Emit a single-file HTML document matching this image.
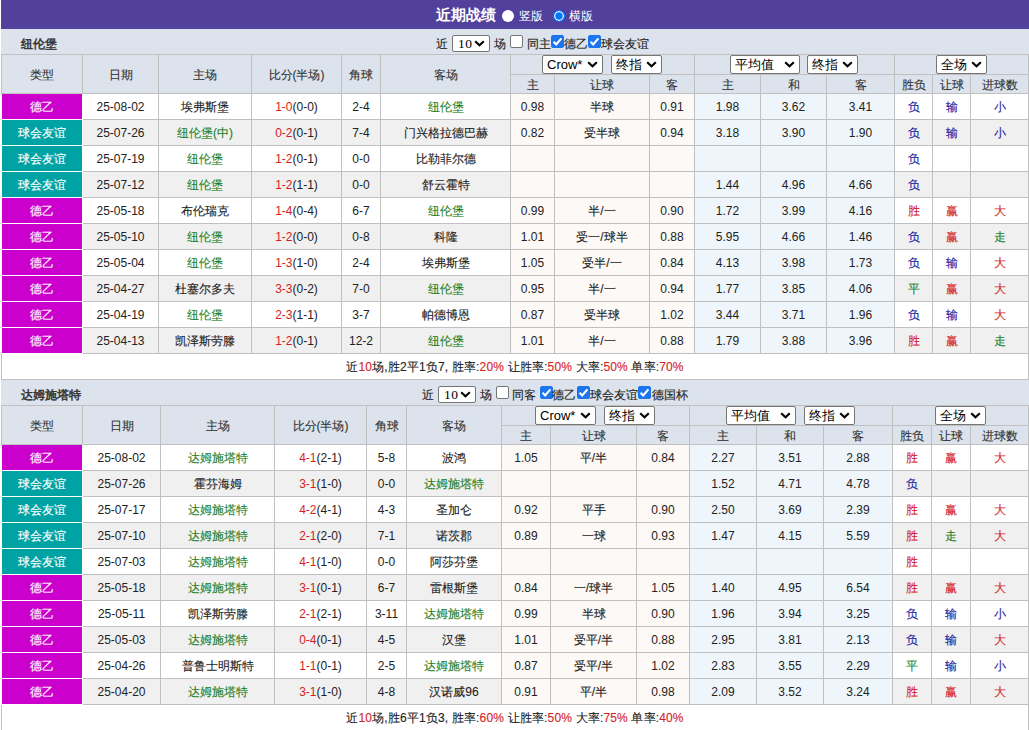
<!DOCTYPE html>
<html><head><meta charset="utf-8"><style>
html,body{margin:0;padding:0;}
body{width:1029px;height:730px;overflow:hidden;position:relative;background:#fff;font-family:"Liberation Sans",sans-serif;font-size:12px;color:#222;}
body>div{position:absolute;}
.t{white-space:nowrap;text-align:center;}
.c{-webkit-text-stroke:0.12px currentColor;}
.b{font-weight:bold;}
.sel{background:#fff;border:1px solid #767676;border-radius:2px;box-sizing:border-box;font-size:13px;color:#000;}
.sel span{position:absolute;top:0;line-height:17px;white-space:nowrap;}
.sel svg{position:absolute;}
.cb{width:13px;height:13px;box-sizing:border-box;border:1px solid #767676;border-radius:2px;background:#fff;}
.cb.on{background:#1a75ee;border-color:#1a75ee;}
.cb svg{position:absolute;left:-1px;top:-1px;}
.rad{width:12px;height:12px;border-radius:50%;background:#fff;box-sizing:border-box;}
.rad.on{background:#0075ff;border:1px solid #0075ff;box-shadow:inset 0 0 0 1.3px #fff;}
</style></head><body>
<div style="left:1px;top:0px;width:1028px;height:29px;background:#51409c;"></div>
<div style="left:1px;top:29px;width:1028px;height:1px;background:#e6e6fa;"></div>
<div class="t b" style="left:436px;top:6px;line-height:18px;font-size:15px;color:#fff">近期战绩</div>
<div class="rad" style="left:502px;top:10px"></div>
<div class="t" style="left:519px;top:8px;line-height:16px;color:#fff">竖版</div>
<div class="rad on" style="left:553px;top:10px"></div>
<div class="t" style="left:569px;top:8px;line-height:16px;color:#fff">横版</div>
<div style="left:1px;top:29px;width:1028px;height:26px;background:#dce3ec;"></div>
<div style="left:1px;top:54px;width:1028px;height:39px;background:#dce3ec;"></div>
<div style="left:1px;top:93px;width:1028px;height:26px;background:#ffffff;"></div>
<div style="left:2px;top:93px;width:80px;height:26px;background:#cc00cc;"></div>
<div style="left:511px;top:93px;width:184px;height:26px;background:#fdf9f6;"></div>
<div style="left:695px;top:93px;width:200px;height:26px;background:#eff6fb;"></div>
<div style="left:1px;top:119px;width:1028px;height:26px;background:#f0f0f0;"></div>
<div style="left:2px;top:119px;width:80px;height:26px;background:#00a3a3;"></div>
<div style="left:511px;top:119px;width:184px;height:26px;background:#fdf9f6;"></div>
<div style="left:695px;top:119px;width:200px;height:26px;background:#eff6fb;"></div>
<div style="left:1px;top:145px;width:1028px;height:26px;background:#ffffff;"></div>
<div style="left:2px;top:145px;width:80px;height:26px;background:#00a3a3;"></div>
<div style="left:511px;top:145px;width:184px;height:26px;background:#fdf9f6;"></div>
<div style="left:695px;top:145px;width:200px;height:26px;background:#eff6fb;"></div>
<div style="left:1px;top:171px;width:1028px;height:26px;background:#f0f0f0;"></div>
<div style="left:2px;top:171px;width:80px;height:26px;background:#00a3a3;"></div>
<div style="left:511px;top:171px;width:184px;height:26px;background:#fdf9f6;"></div>
<div style="left:695px;top:171px;width:200px;height:26px;background:#eff6fb;"></div>
<div style="left:1px;top:197px;width:1028px;height:26px;background:#ffffff;"></div>
<div style="left:2px;top:197px;width:80px;height:26px;background:#cc00cc;"></div>
<div style="left:511px;top:197px;width:184px;height:26px;background:#fdf9f6;"></div>
<div style="left:695px;top:197px;width:200px;height:26px;background:#eff6fb;"></div>
<div style="left:1px;top:223px;width:1028px;height:26px;background:#f0f0f0;"></div>
<div style="left:2px;top:223px;width:80px;height:26px;background:#cc00cc;"></div>
<div style="left:511px;top:223px;width:184px;height:26px;background:#fdf9f6;"></div>
<div style="left:695px;top:223px;width:200px;height:26px;background:#eff6fb;"></div>
<div style="left:1px;top:249px;width:1028px;height:26px;background:#ffffff;"></div>
<div style="left:2px;top:249px;width:80px;height:26px;background:#cc00cc;"></div>
<div style="left:511px;top:249px;width:184px;height:26px;background:#fdf9f6;"></div>
<div style="left:695px;top:249px;width:200px;height:26px;background:#eff6fb;"></div>
<div style="left:1px;top:275px;width:1028px;height:26px;background:#f0f0f0;"></div>
<div style="left:2px;top:275px;width:80px;height:26px;background:#cc00cc;"></div>
<div style="left:511px;top:275px;width:184px;height:26px;background:#fdf9f6;"></div>
<div style="left:695px;top:275px;width:200px;height:26px;background:#eff6fb;"></div>
<div style="left:1px;top:301px;width:1028px;height:26px;background:#ffffff;"></div>
<div style="left:2px;top:301px;width:80px;height:26px;background:#cc00cc;"></div>
<div style="left:511px;top:301px;width:184px;height:26px;background:#fdf9f6;"></div>
<div style="left:695px;top:301px;width:200px;height:26px;background:#eff6fb;"></div>
<div style="left:1px;top:327px;width:1028px;height:26px;background:#f0f0f0;"></div>
<div style="left:2px;top:327px;width:80px;height:26px;background:#cc00cc;"></div>
<div style="left:511px;top:327px;width:184px;height:26px;background:#fdf9f6;"></div>
<div style="left:695px;top:327px;width:200px;height:26px;background:#eff6fb;"></div>
<div style="left:1px;top:353px;width:1028px;height:26px;background:#ffffff;"></div>
<div style="left:1px;top:54px;width:1028px;height:1px;background:#c0c0c0;"></div>
<div style="left:510px;top:74px;width:519px;height:1px;background:#c0c0c0;"></div>
<div style="left:1px;top:93px;width:1028px;height:1px;background:#c0c0c0;"></div>
<div style="left:1px;top:119px;width:1028px;height:1px;background:#c0c0c0;"></div>
<div style="left:1px;top:145px;width:1028px;height:1px;background:#c0c0c0;"></div>
<div style="left:1px;top:171px;width:1028px;height:1px;background:#c0c0c0;"></div>
<div style="left:1px;top:197px;width:1028px;height:1px;background:#c0c0c0;"></div>
<div style="left:1px;top:223px;width:1028px;height:1px;background:#c0c0c0;"></div>
<div style="left:1px;top:249px;width:1028px;height:1px;background:#c0c0c0;"></div>
<div style="left:1px;top:275px;width:1028px;height:1px;background:#c0c0c0;"></div>
<div style="left:1px;top:301px;width:1028px;height:1px;background:#c0c0c0;"></div>
<div style="left:1px;top:327px;width:1028px;height:1px;background:#c0c0c0;"></div>
<div style="left:1px;top:353px;width:1028px;height:1px;background:#c0c0c0;"></div>
<div style="left:1px;top:379px;width:1028px;height:1px;background:#c0c0c0;"></div>
<div style="left:1px;top:54px;width:1px;height:326px;background:#c0c0c0;"></div>
<div style="left:1028px;top:54px;width:1px;height:326px;background:#c0c0c0;"></div>
<div style="left:82px;top:54px;width:1px;height:300px;background:#c0c0c0;"></div>
<div style="left:158px;top:54px;width:1px;height:300px;background:#c0c0c0;"></div>
<div style="left:251px;top:54px;width:1px;height:300px;background:#c0c0c0;"></div>
<div style="left:341px;top:54px;width:1px;height:300px;background:#c0c0c0;"></div>
<div style="left:380px;top:54px;width:1px;height:300px;background:#c0c0c0;"></div>
<div style="left:510px;top:54px;width:1px;height:300px;background:#c0c0c0;"></div>
<div style="left:554px;top:74px;width:1px;height:280px;background:#c0c0c0;"></div>
<div style="left:649px;top:74px;width:1px;height:280px;background:#c0c0c0;"></div>
<div style="left:694px;top:54px;width:1px;height:300px;background:#c0c0c0;"></div>
<div style="left:760px;top:74px;width:1px;height:280px;background:#c0c0c0;"></div>
<div style="left:826px;top:74px;width:1px;height:280px;background:#c0c0c0;"></div>
<div style="left:894px;top:54px;width:1px;height:300px;background:#c0c0c0;"></div>
<div style="left:932px;top:74px;width:1px;height:280px;background:#c0c0c0;"></div>
<div style="left:970px;top:74px;width:1px;height:280px;background:#c0c0c0;"></div>
<div style="left:1px;top:94px;width:82px;height:260px;background:#ffffff;"></div>
<div style="left:2px;top:94px;width:80px;height:25px;background:#cc00cc;"></div>
<div style="left:2px;top:120px;width:80px;height:25px;background:#00a3a3;"></div>
<div style="left:2px;top:146px;width:80px;height:25px;background:#00a3a3;"></div>
<div style="left:2px;top:172px;width:80px;height:25px;background:#00a3a3;"></div>
<div style="left:2px;top:198px;width:80px;height:25px;background:#cc00cc;"></div>
<div style="left:2px;top:224px;width:80px;height:25px;background:#cc00cc;"></div>
<div style="left:2px;top:250px;width:80px;height:25px;background:#cc00cc;"></div>
<div style="left:2px;top:276px;width:80px;height:25px;background:#cc00cc;"></div>
<div style="left:2px;top:302px;width:80px;height:25px;background:#cc00cc;"></div>
<div style="left:2px;top:328px;width:80px;height:25px;background:#cc00cc;"></div>
<div class="t c" style="left:2px;top:56px;width:80px;height:38px;line-height:38px;color:#333;">类型</div>
<div class="t c" style="left:83px;top:56px;width:75px;height:38px;line-height:38px;color:#333;">日期</div>
<div class="t c" style="left:159px;top:56px;width:92px;height:38px;line-height:38px;color:#333;">主场</div>
<div class="t c" style="left:252px;top:56px;width:89px;height:38px;line-height:38px;color:#333;">比分(半场)</div>
<div class="t c" style="left:342px;top:56px;width:38px;height:38px;line-height:38px;color:#333;">角球</div>
<div class="t c" style="left:381px;top:56px;width:129px;height:38px;line-height:38px;color:#333;">客场</div>
<div class="t c" style="left:511px;top:76px;width:43px;height:18px;line-height:18px;color:#333;">主</div>
<div class="t c" style="left:555px;top:76px;width:94px;height:18px;line-height:18px;color:#333;">让球</div>
<div class="t c" style="left:650px;top:76px;width:44px;height:18px;line-height:18px;color:#333;">客</div>
<div class="t c" style="left:695px;top:76px;width:65px;height:18px;line-height:18px;color:#333;">主</div>
<div class="t c" style="left:761px;top:76px;width:65px;height:18px;line-height:18px;color:#333;">和</div>
<div class="t c" style="left:827px;top:76px;width:67px;height:18px;line-height:18px;color:#333;">客</div>
<div class="t c" style="left:895px;top:76px;width:37px;height:18px;line-height:18px;color:#333;">胜负</div>
<div class="t c" style="left:933px;top:76px;width:37px;height:18px;line-height:18px;color:#333;">让球</div>
<div class="t c" style="left:971px;top:76px;width:57px;height:18px;line-height:18px;color:#333;">进球数</div>
<div class="t c" style="left:2px;top:95px;width:80px;height:25px;line-height:25px;color:#fff;">德乙</div>
<div class="t" style="left:83px;top:95px;width:75px;height:25px;line-height:25px;">25-08-02</div>
<div class="t c" style="left:159px;top:95px;width:92px;height:25px;line-height:25px;">埃弗斯堡</div>
<div class="t" style="left:252px;top:95px;width:89px;height:25px;line-height:25px;"><span style="color:#d41e26">1-0</span>(0-0)</div>
<div class="t" style="left:342px;top:95px;width:38px;height:25px;line-height:25px;">2-4</div>
<div class="t c" style="left:381px;top:95px;width:129px;height:25px;line-height:25px;color:#1f7f1f;">纽伦堡</div>
<div class="t" style="left:511px;top:95px;width:43px;height:25px;line-height:25px;">0.98</div>
<div class="t c" style="left:555px;top:95px;width:94px;height:25px;line-height:25px;">半球</div>
<div class="t" style="left:650px;top:95px;width:44px;height:25px;line-height:25px;">0.91</div>
<div class="t" style="left:695px;top:95px;width:65px;height:25px;line-height:25px;">1.98</div>
<div class="t" style="left:761px;top:95px;width:65px;height:25px;line-height:25px;">3.62</div>
<div class="t" style="left:827px;top:95px;width:67px;height:25px;line-height:25px;">3.41</div>
<div class="t c" style="left:895px;top:95px;width:37px;height:25px;line-height:25px;color:#1a1aa0;">负</div>
<div class="t c" style="left:933px;top:95px;width:37px;height:25px;line-height:25px;color:#1a1aa0;">输</div>
<div class="t c" style="left:971px;top:95px;width:57px;height:25px;line-height:25px;color:#1a1aa0;">小</div>
<div class="t c" style="left:2px;top:121px;width:80px;height:25px;line-height:25px;color:#fff;">球会友谊</div>
<div class="t" style="left:83px;top:121px;width:75px;height:25px;line-height:25px;">25-07-26</div>
<div class="t c" style="left:159px;top:121px;width:92px;height:25px;line-height:25px;color:#1f7f1f;">纽伦堡(中)</div>
<div class="t" style="left:252px;top:121px;width:89px;height:25px;line-height:25px;"><span style="color:#d41e26">0-2</span>(0-1)</div>
<div class="t" style="left:342px;top:121px;width:38px;height:25px;line-height:25px;">7-4</div>
<div class="t c" style="left:381px;top:121px;width:129px;height:25px;line-height:25px;">门兴格拉德巴赫</div>
<div class="t" style="left:511px;top:121px;width:43px;height:25px;line-height:25px;">0.82</div>
<div class="t c" style="left:555px;top:121px;width:94px;height:25px;line-height:25px;">受半球</div>
<div class="t" style="left:650px;top:121px;width:44px;height:25px;line-height:25px;">0.94</div>
<div class="t" style="left:695px;top:121px;width:65px;height:25px;line-height:25px;">3.18</div>
<div class="t" style="left:761px;top:121px;width:65px;height:25px;line-height:25px;">3.90</div>
<div class="t" style="left:827px;top:121px;width:67px;height:25px;line-height:25px;">1.90</div>
<div class="t c" style="left:895px;top:121px;width:37px;height:25px;line-height:25px;color:#1a1aa0;">负</div>
<div class="t c" style="left:933px;top:121px;width:37px;height:25px;line-height:25px;color:#1a1aa0;">输</div>
<div class="t c" style="left:971px;top:121px;width:57px;height:25px;line-height:25px;color:#1a1aa0;">小</div>
<div class="t c" style="left:2px;top:147px;width:80px;height:25px;line-height:25px;color:#fff;">球会友谊</div>
<div class="t" style="left:83px;top:147px;width:75px;height:25px;line-height:25px;">25-07-19</div>
<div class="t c" style="left:159px;top:147px;width:92px;height:25px;line-height:25px;color:#1f7f1f;">纽伦堡</div>
<div class="t" style="left:252px;top:147px;width:89px;height:25px;line-height:25px;"><span style="color:#d41e26">1-2</span>(0-1)</div>
<div class="t" style="left:342px;top:147px;width:38px;height:25px;line-height:25px;">0-0</div>
<div class="t c" style="left:381px;top:147px;width:129px;height:25px;line-height:25px;">比勒菲尔德</div>
<div class="t c" style="left:895px;top:147px;width:37px;height:25px;line-height:25px;color:#1a1aa0;">负</div>
<div class="t c" style="left:2px;top:173px;width:80px;height:25px;line-height:25px;color:#fff;">球会友谊</div>
<div class="t" style="left:83px;top:173px;width:75px;height:25px;line-height:25px;">25-07-12</div>
<div class="t c" style="left:159px;top:173px;width:92px;height:25px;line-height:25px;color:#1f7f1f;">纽伦堡</div>
<div class="t" style="left:252px;top:173px;width:89px;height:25px;line-height:25px;"><span style="color:#d41e26">1-2</span>(1-1)</div>
<div class="t" style="left:342px;top:173px;width:38px;height:25px;line-height:25px;">0-0</div>
<div class="t c" style="left:381px;top:173px;width:129px;height:25px;line-height:25px;">舒云霍特</div>
<div class="t" style="left:695px;top:173px;width:65px;height:25px;line-height:25px;">1.44</div>
<div class="t" style="left:761px;top:173px;width:65px;height:25px;line-height:25px;">4.96</div>
<div class="t" style="left:827px;top:173px;width:67px;height:25px;line-height:25px;">4.66</div>
<div class="t c" style="left:895px;top:173px;width:37px;height:25px;line-height:25px;color:#1a1aa0;">负</div>
<div class="t c" style="left:2px;top:199px;width:80px;height:25px;line-height:25px;color:#fff;">德乙</div>
<div class="t" style="left:83px;top:199px;width:75px;height:25px;line-height:25px;">25-05-18</div>
<div class="t c" style="left:159px;top:199px;width:92px;height:25px;line-height:25px;">布伦瑞克</div>
<div class="t" style="left:252px;top:199px;width:89px;height:25px;line-height:25px;"><span style="color:#d41e26">1-4</span>(0-4)</div>
<div class="t" style="left:342px;top:199px;width:38px;height:25px;line-height:25px;">6-7</div>
<div class="t c" style="left:381px;top:199px;width:129px;height:25px;line-height:25px;color:#1f7f1f;">纽伦堡</div>
<div class="t" style="left:511px;top:199px;width:43px;height:25px;line-height:25px;">0.99</div>
<div class="t c" style="left:555px;top:199px;width:94px;height:25px;line-height:25px;">半/一</div>
<div class="t" style="left:650px;top:199px;width:44px;height:25px;line-height:25px;">0.90</div>
<div class="t" style="left:695px;top:199px;width:65px;height:25px;line-height:25px;">1.72</div>
<div class="t" style="left:761px;top:199px;width:65px;height:25px;line-height:25px;">3.99</div>
<div class="t" style="left:827px;top:199px;width:67px;height:25px;line-height:25px;">4.16</div>
<div class="t c" style="left:895px;top:199px;width:37px;height:25px;line-height:25px;color:#d41e26;">胜</div>
<div class="t c" style="left:933px;top:199px;width:37px;height:25px;line-height:25px;color:#d41e26;">赢</div>
<div class="t c" style="left:971px;top:199px;width:57px;height:25px;line-height:25px;color:#d41e26;">大</div>
<div class="t c" style="left:2px;top:225px;width:80px;height:25px;line-height:25px;color:#fff;">德乙</div>
<div class="t" style="left:83px;top:225px;width:75px;height:25px;line-height:25px;">25-05-10</div>
<div class="t c" style="left:159px;top:225px;width:92px;height:25px;line-height:25px;color:#1f7f1f;">纽伦堡</div>
<div class="t" style="left:252px;top:225px;width:89px;height:25px;line-height:25px;"><span style="color:#d41e26">1-2</span>(0-0)</div>
<div class="t" style="left:342px;top:225px;width:38px;height:25px;line-height:25px;">0-8</div>
<div class="t c" style="left:381px;top:225px;width:129px;height:25px;line-height:25px;">科隆</div>
<div class="t" style="left:511px;top:225px;width:43px;height:25px;line-height:25px;">1.01</div>
<div class="t c" style="left:555px;top:225px;width:94px;height:25px;line-height:25px;">受一/球半</div>
<div class="t" style="left:650px;top:225px;width:44px;height:25px;line-height:25px;">0.88</div>
<div class="t" style="left:695px;top:225px;width:65px;height:25px;line-height:25px;">5.95</div>
<div class="t" style="left:761px;top:225px;width:65px;height:25px;line-height:25px;">4.66</div>
<div class="t" style="left:827px;top:225px;width:67px;height:25px;line-height:25px;">1.46</div>
<div class="t c" style="left:895px;top:225px;width:37px;height:25px;line-height:25px;color:#1a1aa0;">负</div>
<div class="t c" style="left:933px;top:225px;width:37px;height:25px;line-height:25px;color:#d41e26;">赢</div>
<div class="t c" style="left:971px;top:225px;width:57px;height:25px;line-height:25px;color:#1f7f1f;">走</div>
<div class="t c" style="left:2px;top:251px;width:80px;height:25px;line-height:25px;color:#fff;">德乙</div>
<div class="t" style="left:83px;top:251px;width:75px;height:25px;line-height:25px;">25-05-04</div>
<div class="t c" style="left:159px;top:251px;width:92px;height:25px;line-height:25px;color:#1f7f1f;">纽伦堡</div>
<div class="t" style="left:252px;top:251px;width:89px;height:25px;line-height:25px;"><span style="color:#d41e26">1-3</span>(1-0)</div>
<div class="t" style="left:342px;top:251px;width:38px;height:25px;line-height:25px;">2-4</div>
<div class="t c" style="left:381px;top:251px;width:129px;height:25px;line-height:25px;">埃弗斯堡</div>
<div class="t" style="left:511px;top:251px;width:43px;height:25px;line-height:25px;">1.05</div>
<div class="t c" style="left:555px;top:251px;width:94px;height:25px;line-height:25px;">受半/一</div>
<div class="t" style="left:650px;top:251px;width:44px;height:25px;line-height:25px;">0.84</div>
<div class="t" style="left:695px;top:251px;width:65px;height:25px;line-height:25px;">4.13</div>
<div class="t" style="left:761px;top:251px;width:65px;height:25px;line-height:25px;">3.98</div>
<div class="t" style="left:827px;top:251px;width:67px;height:25px;line-height:25px;">1.73</div>
<div class="t c" style="left:895px;top:251px;width:37px;height:25px;line-height:25px;color:#1a1aa0;">负</div>
<div class="t c" style="left:933px;top:251px;width:37px;height:25px;line-height:25px;color:#1a1aa0;">输</div>
<div class="t c" style="left:971px;top:251px;width:57px;height:25px;line-height:25px;color:#d41e26;">大</div>
<div class="t c" style="left:2px;top:277px;width:80px;height:25px;line-height:25px;color:#fff;">德乙</div>
<div class="t" style="left:83px;top:277px;width:75px;height:25px;line-height:25px;">25-04-27</div>
<div class="t c" style="left:159px;top:277px;width:92px;height:25px;line-height:25px;">杜塞尔多夫</div>
<div class="t" style="left:252px;top:277px;width:89px;height:25px;line-height:25px;"><span style="color:#d41e26">3-3</span>(0-2)</div>
<div class="t" style="left:342px;top:277px;width:38px;height:25px;line-height:25px;">7-0</div>
<div class="t c" style="left:381px;top:277px;width:129px;height:25px;line-height:25px;color:#1f7f1f;">纽伦堡</div>
<div class="t" style="left:511px;top:277px;width:43px;height:25px;line-height:25px;">0.95</div>
<div class="t c" style="left:555px;top:277px;width:94px;height:25px;line-height:25px;">半/一</div>
<div class="t" style="left:650px;top:277px;width:44px;height:25px;line-height:25px;">0.94</div>
<div class="t" style="left:695px;top:277px;width:65px;height:25px;line-height:25px;">1.77</div>
<div class="t" style="left:761px;top:277px;width:65px;height:25px;line-height:25px;">3.85</div>
<div class="t" style="left:827px;top:277px;width:67px;height:25px;line-height:25px;">4.06</div>
<div class="t c" style="left:895px;top:277px;width:37px;height:25px;line-height:25px;color:#1f7f1f;">平</div>
<div class="t c" style="left:933px;top:277px;width:37px;height:25px;line-height:25px;color:#d41e26;">赢</div>
<div class="t c" style="left:971px;top:277px;width:57px;height:25px;line-height:25px;color:#d41e26;">大</div>
<div class="t c" style="left:2px;top:303px;width:80px;height:25px;line-height:25px;color:#fff;">德乙</div>
<div class="t" style="left:83px;top:303px;width:75px;height:25px;line-height:25px;">25-04-19</div>
<div class="t c" style="left:159px;top:303px;width:92px;height:25px;line-height:25px;color:#1f7f1f;">纽伦堡</div>
<div class="t" style="left:252px;top:303px;width:89px;height:25px;line-height:25px;"><span style="color:#d41e26">2-3</span>(1-1)</div>
<div class="t" style="left:342px;top:303px;width:38px;height:25px;line-height:25px;">3-7</div>
<div class="t c" style="left:381px;top:303px;width:129px;height:25px;line-height:25px;">帕德博恩</div>
<div class="t" style="left:511px;top:303px;width:43px;height:25px;line-height:25px;">0.87</div>
<div class="t c" style="left:555px;top:303px;width:94px;height:25px;line-height:25px;">受半球</div>
<div class="t" style="left:650px;top:303px;width:44px;height:25px;line-height:25px;">1.02</div>
<div class="t" style="left:695px;top:303px;width:65px;height:25px;line-height:25px;">3.44</div>
<div class="t" style="left:761px;top:303px;width:65px;height:25px;line-height:25px;">3.71</div>
<div class="t" style="left:827px;top:303px;width:67px;height:25px;line-height:25px;">1.96</div>
<div class="t c" style="left:895px;top:303px;width:37px;height:25px;line-height:25px;color:#1a1aa0;">负</div>
<div class="t c" style="left:933px;top:303px;width:37px;height:25px;line-height:25px;color:#1a1aa0;">输</div>
<div class="t c" style="left:971px;top:303px;width:57px;height:25px;line-height:25px;color:#d41e26;">大</div>
<div class="t c" style="left:2px;top:329px;width:80px;height:25px;line-height:25px;color:#fff;">德乙</div>
<div class="t" style="left:83px;top:329px;width:75px;height:25px;line-height:25px;">25-04-13</div>
<div class="t c" style="left:159px;top:329px;width:92px;height:25px;line-height:25px;">凯泽斯劳滕</div>
<div class="t" style="left:252px;top:329px;width:89px;height:25px;line-height:25px;"><span style="color:#d41e26">1-2</span>(0-1)</div>
<div class="t" style="left:342px;top:329px;width:38px;height:25px;line-height:25px;">12-2</div>
<div class="t c" style="left:381px;top:329px;width:129px;height:25px;line-height:25px;color:#1f7f1f;">纽伦堡</div>
<div class="t" style="left:511px;top:329px;width:43px;height:25px;line-height:25px;">1.01</div>
<div class="t c" style="left:555px;top:329px;width:94px;height:25px;line-height:25px;">半/一</div>
<div class="t" style="left:650px;top:329px;width:44px;height:25px;line-height:25px;">0.88</div>
<div class="t" style="left:695px;top:329px;width:65px;height:25px;line-height:25px;">1.79</div>
<div class="t" style="left:761px;top:329px;width:65px;height:25px;line-height:25px;">3.88</div>
<div class="t" style="left:827px;top:329px;width:67px;height:25px;line-height:25px;">3.96</div>
<div class="t c" style="left:895px;top:329px;width:37px;height:25px;line-height:25px;color:#d41e26;">胜</div>
<div class="t c" style="left:933px;top:329px;width:37px;height:25px;line-height:25px;color:#d41e26;">赢</div>
<div class="t c" style="left:971px;top:329px;width:57px;height:25px;line-height:25px;color:#1f7f1f;">走</div>
<div class="t c" style="left:1px;top:355px;width:1028px;height:25px;line-height:25px;letter-spacing:0.16px;">近<span style="color:#d41e26">10</span>场,胜2平1负7, 胜率:<span style="color:#d41e26">20%</span> 让胜率:<span style="color:#d41e26">50%</span> 大率:<span style="color:#d41e26">50%</span> 单率:<span style="color:#d41e26">70%</span></div>
<div class="t" style="left:21px;top:36px;line-height:16px;color:#333;-webkit-text-stroke:0.5px #333">纽伦堡</div>
<div class="t c" style="left:436px;top:36px;line-height:16px;">近</div>
<div class="sel" style="left:452px;top:35px;width:38px;height:17px;"><span style="left:5px;font-family:'Liberation Serif',serif;font-size:13.5px;letter-spacing:0.5px;line-height:15px">10</span><svg style="right:4px;top:4px" width="11" height="7" viewBox="0 0 11 7"><path d="M1.2 1.2 L5.5 5.3 L9.8 1.2" fill="none" stroke="#000" stroke-width="2.1"/></svg></div>
<div class="t c" style="left:494px;top:36px;line-height:16px;">场</div>
<div class="cb" style="left:510px;top:35px"></div>
<div class="t c" style="left:527px;top:36px;line-height:16px;">同主</div>
<div class="cb on" style="left:551px;top:35px"><svg width="13" height="13" viewBox="0 0 13 13"><path d="M2.6 6.7 L5.2 9.4 L10.4 3.4" fill="none" stroke="#fff" stroke-width="2.2"/></svg></div>
<div class="t c" style="left:564px;top:36px;line-height:16px;">德乙</div>
<div class="cb on" style="left:588px;top:35px"><svg width="13" height="13" viewBox="0 0 13 13"><path d="M2.6 6.7 L5.2 9.4 L10.4 3.4" fill="none" stroke="#fff" stroke-width="2.2"/></svg></div>
<div class="t c" style="left:601px;top:36px;line-height:16px;">球会友谊</div>
<div class="sel" style="left:542px;top:55px;width:61px;height:19px;"><span style="left:4px;">Crow*</span><svg style="right:4px;top:5px" width="11" height="7" viewBox="0 0 11 7"><path d="M1.2 1.2 L5.5 5.3 L9.8 1.2" fill="none" stroke="#000" stroke-width="2.1"/></svg></div>
<div class="sel" style="left:611px;top:55px;width:51px;height:19px;"><span style="left:4px;">终指</span><svg style="right:4px;top:5px" width="11" height="7" viewBox="0 0 11 7"><path d="M1.2 1.2 L5.5 5.3 L9.8 1.2" fill="none" stroke="#000" stroke-width="2.1"/></svg></div>
<div class="sel" style="left:730px;top:55px;width:70px;height:19px;"><span style="left:4px;">平均值</span><svg style="right:4px;top:5px" width="11" height="7" viewBox="0 0 11 7"><path d="M1.2 1.2 L5.5 5.3 L9.8 1.2" fill="none" stroke="#000" stroke-width="2.1"/></svg></div>
<div class="sel" style="left:807px;top:55px;width:51px;height:19px;"><span style="left:4px;">终指</span><svg style="right:4px;top:5px" width="11" height="7" viewBox="0 0 11 7"><path d="M1.2 1.2 L5.5 5.3 L9.8 1.2" fill="none" stroke="#000" stroke-width="2.1"/></svg></div>
<div class="sel" style="left:936px;top:55px;width:51px;height:19px;"><span style="left:4px;">全场</span><svg style="right:4px;top:5px" width="11" height="7" viewBox="0 0 11 7"><path d="M1.2 1.2 L5.5 5.3 L9.8 1.2" fill="none" stroke="#000" stroke-width="2.1"/></svg></div>
<div style="left:1px;top:379px;width:1028px;height:26px;background:#dce3ec;"></div>
<div style="left:1px;top:405px;width:1028px;height:39px;background:#dce3ec;"></div>
<div style="left:1px;top:444px;width:1028px;height:26px;background:#ffffff;"></div>
<div style="left:2px;top:444px;width:80px;height:26px;background:#cc00cc;"></div>
<div style="left:502px;top:444px;width:188px;height:26px;background:#fdf9f6;"></div>
<div style="left:690px;top:444px;width:203px;height:26px;background:#eff6fb;"></div>
<div style="left:1px;top:470px;width:1028px;height:26px;background:#f0f0f0;"></div>
<div style="left:2px;top:470px;width:80px;height:26px;background:#00a3a3;"></div>
<div style="left:502px;top:470px;width:188px;height:26px;background:#fdf9f6;"></div>
<div style="left:690px;top:470px;width:203px;height:26px;background:#eff6fb;"></div>
<div style="left:1px;top:496px;width:1028px;height:26px;background:#ffffff;"></div>
<div style="left:2px;top:496px;width:80px;height:26px;background:#00a3a3;"></div>
<div style="left:502px;top:496px;width:188px;height:26px;background:#fdf9f6;"></div>
<div style="left:690px;top:496px;width:203px;height:26px;background:#eff6fb;"></div>
<div style="left:1px;top:522px;width:1028px;height:26px;background:#f0f0f0;"></div>
<div style="left:2px;top:522px;width:80px;height:26px;background:#00a3a3;"></div>
<div style="left:502px;top:522px;width:188px;height:26px;background:#fdf9f6;"></div>
<div style="left:690px;top:522px;width:203px;height:26px;background:#eff6fb;"></div>
<div style="left:1px;top:548px;width:1028px;height:26px;background:#ffffff;"></div>
<div style="left:2px;top:548px;width:80px;height:26px;background:#00a3a3;"></div>
<div style="left:502px;top:548px;width:188px;height:26px;background:#fdf9f6;"></div>
<div style="left:690px;top:548px;width:203px;height:26px;background:#eff6fb;"></div>
<div style="left:1px;top:574px;width:1028px;height:26px;background:#f0f0f0;"></div>
<div style="left:2px;top:574px;width:80px;height:26px;background:#cc00cc;"></div>
<div style="left:502px;top:574px;width:188px;height:26px;background:#fdf9f6;"></div>
<div style="left:690px;top:574px;width:203px;height:26px;background:#eff6fb;"></div>
<div style="left:1px;top:600px;width:1028px;height:26px;background:#ffffff;"></div>
<div style="left:2px;top:600px;width:80px;height:26px;background:#cc00cc;"></div>
<div style="left:502px;top:600px;width:188px;height:26px;background:#fdf9f6;"></div>
<div style="left:690px;top:600px;width:203px;height:26px;background:#eff6fb;"></div>
<div style="left:1px;top:626px;width:1028px;height:26px;background:#f0f0f0;"></div>
<div style="left:2px;top:626px;width:80px;height:26px;background:#cc00cc;"></div>
<div style="left:502px;top:626px;width:188px;height:26px;background:#fdf9f6;"></div>
<div style="left:690px;top:626px;width:203px;height:26px;background:#eff6fb;"></div>
<div style="left:1px;top:652px;width:1028px;height:26px;background:#ffffff;"></div>
<div style="left:2px;top:652px;width:80px;height:26px;background:#cc00cc;"></div>
<div style="left:502px;top:652px;width:188px;height:26px;background:#fdf9f6;"></div>
<div style="left:690px;top:652px;width:203px;height:26px;background:#eff6fb;"></div>
<div style="left:1px;top:678px;width:1028px;height:26px;background:#f0f0f0;"></div>
<div style="left:2px;top:678px;width:80px;height:26px;background:#cc00cc;"></div>
<div style="left:502px;top:678px;width:188px;height:26px;background:#fdf9f6;"></div>
<div style="left:690px;top:678px;width:203px;height:26px;background:#eff6fb;"></div>
<div style="left:1px;top:704px;width:1028px;height:26px;background:#ffffff;"></div>
<div style="left:1px;top:379px;width:1028px;height:1px;background:#c0c0c0;"></div>
<div style="left:1px;top:405px;width:1028px;height:1px;background:#c0c0c0;"></div>
<div style="left:501px;top:425px;width:528px;height:1px;background:#c0c0c0;"></div>
<div style="left:1px;top:444px;width:1028px;height:1px;background:#c0c0c0;"></div>
<div style="left:1px;top:470px;width:1028px;height:1px;background:#c0c0c0;"></div>
<div style="left:1px;top:496px;width:1028px;height:1px;background:#c0c0c0;"></div>
<div style="left:1px;top:522px;width:1028px;height:1px;background:#c0c0c0;"></div>
<div style="left:1px;top:548px;width:1028px;height:1px;background:#c0c0c0;"></div>
<div style="left:1px;top:574px;width:1028px;height:1px;background:#c0c0c0;"></div>
<div style="left:1px;top:600px;width:1028px;height:1px;background:#c0c0c0;"></div>
<div style="left:1px;top:626px;width:1028px;height:1px;background:#c0c0c0;"></div>
<div style="left:1px;top:652px;width:1028px;height:1px;background:#c0c0c0;"></div>
<div style="left:1px;top:678px;width:1028px;height:1px;background:#c0c0c0;"></div>
<div style="left:1px;top:704px;width:1028px;height:1px;background:#c0c0c0;"></div>
<div style="left:1px;top:730px;width:1028px;height:1px;background:#c0c0c0;"></div>
<div style="left:1px;top:405px;width:1px;height:326px;background:#c0c0c0;"></div>
<div style="left:1028px;top:405px;width:1px;height:326px;background:#c0c0c0;"></div>
<div style="left:82px;top:405px;width:1px;height:300px;background:#c0c0c0;"></div>
<div style="left:160px;top:405px;width:1px;height:300px;background:#c0c0c0;"></div>
<div style="left:274px;top:405px;width:1px;height:300px;background:#c0c0c0;"></div>
<div style="left:366px;top:405px;width:1px;height:300px;background:#c0c0c0;"></div>
<div style="left:406px;top:405px;width:1px;height:300px;background:#c0c0c0;"></div>
<div style="left:501px;top:405px;width:1px;height:300px;background:#c0c0c0;"></div>
<div style="left:550px;top:425px;width:1px;height:280px;background:#c0c0c0;"></div>
<div style="left:636px;top:425px;width:1px;height:280px;background:#c0c0c0;"></div>
<div style="left:689px;top:405px;width:1px;height:300px;background:#c0c0c0;"></div>
<div style="left:756px;top:425px;width:1px;height:280px;background:#c0c0c0;"></div>
<div style="left:823px;top:425px;width:1px;height:280px;background:#c0c0c0;"></div>
<div style="left:892px;top:405px;width:1px;height:300px;background:#c0c0c0;"></div>
<div style="left:931px;top:425px;width:1px;height:280px;background:#c0c0c0;"></div>
<div style="left:970px;top:425px;width:1px;height:280px;background:#c0c0c0;"></div>
<div style="left:1px;top:445px;width:82px;height:260px;background:#ffffff;"></div>
<div style="left:2px;top:445px;width:80px;height:25px;background:#cc00cc;"></div>
<div style="left:2px;top:471px;width:80px;height:25px;background:#00a3a3;"></div>
<div style="left:2px;top:497px;width:80px;height:25px;background:#00a3a3;"></div>
<div style="left:2px;top:523px;width:80px;height:25px;background:#00a3a3;"></div>
<div style="left:2px;top:549px;width:80px;height:25px;background:#00a3a3;"></div>
<div style="left:2px;top:575px;width:80px;height:25px;background:#cc00cc;"></div>
<div style="left:2px;top:601px;width:80px;height:25px;background:#cc00cc;"></div>
<div style="left:2px;top:627px;width:80px;height:25px;background:#cc00cc;"></div>
<div style="left:2px;top:653px;width:80px;height:25px;background:#cc00cc;"></div>
<div style="left:2px;top:679px;width:80px;height:25px;background:#cc00cc;"></div>
<div class="t c" style="left:2px;top:407px;width:80px;height:38px;line-height:38px;color:#333;">类型</div>
<div class="t c" style="left:83px;top:407px;width:77px;height:38px;line-height:38px;color:#333;">日期</div>
<div class="t c" style="left:161px;top:407px;width:113px;height:38px;line-height:38px;color:#333;">主场</div>
<div class="t c" style="left:275px;top:407px;width:91px;height:38px;line-height:38px;color:#333;">比分(半场)</div>
<div class="t c" style="left:367px;top:407px;width:39px;height:38px;line-height:38px;color:#333;">角球</div>
<div class="t c" style="left:407px;top:407px;width:94px;height:38px;line-height:38px;color:#333;">客场</div>
<div class="t c" style="left:502px;top:427px;width:48px;height:18px;line-height:18px;color:#333;">主</div>
<div class="t c" style="left:551px;top:427px;width:85px;height:18px;line-height:18px;color:#333;">让球</div>
<div class="t c" style="left:637px;top:427px;width:52px;height:18px;line-height:18px;color:#333;">客</div>
<div class="t c" style="left:690px;top:427px;width:66px;height:18px;line-height:18px;color:#333;">主</div>
<div class="t c" style="left:757px;top:427px;width:66px;height:18px;line-height:18px;color:#333;">和</div>
<div class="t c" style="left:824px;top:427px;width:68px;height:18px;line-height:18px;color:#333;">客</div>
<div class="t c" style="left:893px;top:427px;width:38px;height:18px;line-height:18px;color:#333;">胜负</div>
<div class="t c" style="left:932px;top:427px;width:38px;height:18px;line-height:18px;color:#333;">让球</div>
<div class="t c" style="left:971px;top:427px;width:57px;height:18px;line-height:18px;color:#333;">进球数</div>
<div class="t c" style="left:2px;top:446px;width:80px;height:25px;line-height:25px;color:#fff;">德乙</div>
<div class="t" style="left:83px;top:446px;width:77px;height:25px;line-height:25px;">25-08-02</div>
<div class="t c" style="left:161px;top:446px;width:113px;height:25px;line-height:25px;color:#1f7f1f;">达姆施塔特</div>
<div class="t" style="left:275px;top:446px;width:91px;height:25px;line-height:25px;"><span style="color:#d41e26">4-1</span>(2-1)</div>
<div class="t" style="left:367px;top:446px;width:39px;height:25px;line-height:25px;">5-8</div>
<div class="t c" style="left:407px;top:446px;width:94px;height:25px;line-height:25px;">波鸿</div>
<div class="t" style="left:502px;top:446px;width:48px;height:25px;line-height:25px;">1.05</div>
<div class="t c" style="left:551px;top:446px;width:85px;height:25px;line-height:25px;">平/半</div>
<div class="t" style="left:637px;top:446px;width:52px;height:25px;line-height:25px;">0.84</div>
<div class="t" style="left:690px;top:446px;width:66px;height:25px;line-height:25px;">2.27</div>
<div class="t" style="left:757px;top:446px;width:66px;height:25px;line-height:25px;">3.51</div>
<div class="t" style="left:824px;top:446px;width:68px;height:25px;line-height:25px;">2.88</div>
<div class="t c" style="left:893px;top:446px;width:38px;height:25px;line-height:25px;color:#d41e26;">胜</div>
<div class="t c" style="left:932px;top:446px;width:38px;height:25px;line-height:25px;color:#d41e26;">赢</div>
<div class="t c" style="left:971px;top:446px;width:57px;height:25px;line-height:25px;color:#d41e26;">大</div>
<div class="t c" style="left:2px;top:472px;width:80px;height:25px;line-height:25px;color:#fff;">球会友谊</div>
<div class="t" style="left:83px;top:472px;width:77px;height:25px;line-height:25px;">25-07-26</div>
<div class="t c" style="left:161px;top:472px;width:113px;height:25px;line-height:25px;">霍芬海姆</div>
<div class="t" style="left:275px;top:472px;width:91px;height:25px;line-height:25px;"><span style="color:#d41e26">3-1</span>(1-0)</div>
<div class="t" style="left:367px;top:472px;width:39px;height:25px;line-height:25px;">0-0</div>
<div class="t c" style="left:407px;top:472px;width:94px;height:25px;line-height:25px;color:#1f7f1f;">达姆施塔特</div>
<div class="t" style="left:690px;top:472px;width:66px;height:25px;line-height:25px;">1.52</div>
<div class="t" style="left:757px;top:472px;width:66px;height:25px;line-height:25px;">4.71</div>
<div class="t" style="left:824px;top:472px;width:68px;height:25px;line-height:25px;">4.78</div>
<div class="t c" style="left:893px;top:472px;width:38px;height:25px;line-height:25px;color:#1a1aa0;">负</div>
<div class="t c" style="left:2px;top:498px;width:80px;height:25px;line-height:25px;color:#fff;">球会友谊</div>
<div class="t" style="left:83px;top:498px;width:77px;height:25px;line-height:25px;">25-07-17</div>
<div class="t c" style="left:161px;top:498px;width:113px;height:25px;line-height:25px;color:#1f7f1f;">达姆施塔特</div>
<div class="t" style="left:275px;top:498px;width:91px;height:25px;line-height:25px;"><span style="color:#d41e26">4-2</span>(4-1)</div>
<div class="t" style="left:367px;top:498px;width:39px;height:25px;line-height:25px;">4-3</div>
<div class="t c" style="left:407px;top:498px;width:94px;height:25px;line-height:25px;">圣加仑</div>
<div class="t" style="left:502px;top:498px;width:48px;height:25px;line-height:25px;">0.92</div>
<div class="t c" style="left:551px;top:498px;width:85px;height:25px;line-height:25px;">平手</div>
<div class="t" style="left:637px;top:498px;width:52px;height:25px;line-height:25px;">0.90</div>
<div class="t" style="left:690px;top:498px;width:66px;height:25px;line-height:25px;">2.50</div>
<div class="t" style="left:757px;top:498px;width:66px;height:25px;line-height:25px;">3.69</div>
<div class="t" style="left:824px;top:498px;width:68px;height:25px;line-height:25px;">2.39</div>
<div class="t c" style="left:893px;top:498px;width:38px;height:25px;line-height:25px;color:#d41e26;">胜</div>
<div class="t c" style="left:932px;top:498px;width:38px;height:25px;line-height:25px;color:#d41e26;">赢</div>
<div class="t c" style="left:971px;top:498px;width:57px;height:25px;line-height:25px;color:#d41e26;">大</div>
<div class="t c" style="left:2px;top:524px;width:80px;height:25px;line-height:25px;color:#fff;">球会友谊</div>
<div class="t" style="left:83px;top:524px;width:77px;height:25px;line-height:25px;">25-07-10</div>
<div class="t c" style="left:161px;top:524px;width:113px;height:25px;line-height:25px;color:#1f7f1f;">达姆施塔特</div>
<div class="t" style="left:275px;top:524px;width:91px;height:25px;line-height:25px;"><span style="color:#d41e26">2-1</span>(2-0)</div>
<div class="t" style="left:367px;top:524px;width:39px;height:25px;line-height:25px;">7-1</div>
<div class="t c" style="left:407px;top:524px;width:94px;height:25px;line-height:25px;">诺茨郡</div>
<div class="t" style="left:502px;top:524px;width:48px;height:25px;line-height:25px;">0.89</div>
<div class="t c" style="left:551px;top:524px;width:85px;height:25px;line-height:25px;">一球</div>
<div class="t" style="left:637px;top:524px;width:52px;height:25px;line-height:25px;">0.93</div>
<div class="t" style="left:690px;top:524px;width:66px;height:25px;line-height:25px;">1.47</div>
<div class="t" style="left:757px;top:524px;width:66px;height:25px;line-height:25px;">4.15</div>
<div class="t" style="left:824px;top:524px;width:68px;height:25px;line-height:25px;">5.59</div>
<div class="t c" style="left:893px;top:524px;width:38px;height:25px;line-height:25px;color:#d41e26;">胜</div>
<div class="t c" style="left:932px;top:524px;width:38px;height:25px;line-height:25px;color:#1f7f1f;">走</div>
<div class="t c" style="left:971px;top:524px;width:57px;height:25px;line-height:25px;color:#d41e26;">大</div>
<div class="t c" style="left:2px;top:550px;width:80px;height:25px;line-height:25px;color:#fff;">球会友谊</div>
<div class="t" style="left:83px;top:550px;width:77px;height:25px;line-height:25px;">25-07-03</div>
<div class="t c" style="left:161px;top:550px;width:113px;height:25px;line-height:25px;color:#1f7f1f;">达姆施塔特</div>
<div class="t" style="left:275px;top:550px;width:91px;height:25px;line-height:25px;"><span style="color:#d41e26">4-1</span>(1-0)</div>
<div class="t" style="left:367px;top:550px;width:39px;height:25px;line-height:25px;">0-0</div>
<div class="t c" style="left:407px;top:550px;width:94px;height:25px;line-height:25px;">阿莎芬堡</div>
<div class="t c" style="left:893px;top:550px;width:38px;height:25px;line-height:25px;color:#d41e26;">胜</div>
<div class="t c" style="left:2px;top:576px;width:80px;height:25px;line-height:25px;color:#fff;">德乙</div>
<div class="t" style="left:83px;top:576px;width:77px;height:25px;line-height:25px;">25-05-18</div>
<div class="t c" style="left:161px;top:576px;width:113px;height:25px;line-height:25px;color:#1f7f1f;">达姆施塔特</div>
<div class="t" style="left:275px;top:576px;width:91px;height:25px;line-height:25px;"><span style="color:#d41e26">3-1</span>(0-1)</div>
<div class="t" style="left:367px;top:576px;width:39px;height:25px;line-height:25px;">6-7</div>
<div class="t c" style="left:407px;top:576px;width:94px;height:25px;line-height:25px;">雷根斯堡</div>
<div class="t" style="left:502px;top:576px;width:48px;height:25px;line-height:25px;">0.84</div>
<div class="t c" style="left:551px;top:576px;width:85px;height:25px;line-height:25px;">一/球半</div>
<div class="t" style="left:637px;top:576px;width:52px;height:25px;line-height:25px;">1.05</div>
<div class="t" style="left:690px;top:576px;width:66px;height:25px;line-height:25px;">1.40</div>
<div class="t" style="left:757px;top:576px;width:66px;height:25px;line-height:25px;">4.95</div>
<div class="t" style="left:824px;top:576px;width:68px;height:25px;line-height:25px;">6.54</div>
<div class="t c" style="left:893px;top:576px;width:38px;height:25px;line-height:25px;color:#d41e26;">胜</div>
<div class="t c" style="left:932px;top:576px;width:38px;height:25px;line-height:25px;color:#d41e26;">赢</div>
<div class="t c" style="left:971px;top:576px;width:57px;height:25px;line-height:25px;color:#d41e26;">大</div>
<div class="t c" style="left:2px;top:602px;width:80px;height:25px;line-height:25px;color:#fff;">德乙</div>
<div class="t" style="left:83px;top:602px;width:77px;height:25px;line-height:25px;">25-05-11</div>
<div class="t c" style="left:161px;top:602px;width:113px;height:25px;line-height:25px;">凯泽斯劳滕</div>
<div class="t" style="left:275px;top:602px;width:91px;height:25px;line-height:25px;"><span style="color:#d41e26">2-1</span>(2-1)</div>
<div class="t" style="left:367px;top:602px;width:39px;height:25px;line-height:25px;">3-11</div>
<div class="t c" style="left:407px;top:602px;width:94px;height:25px;line-height:25px;color:#1f7f1f;">达姆施塔特</div>
<div class="t" style="left:502px;top:602px;width:48px;height:25px;line-height:25px;">0.99</div>
<div class="t c" style="left:551px;top:602px;width:85px;height:25px;line-height:25px;">半球</div>
<div class="t" style="left:637px;top:602px;width:52px;height:25px;line-height:25px;">0.90</div>
<div class="t" style="left:690px;top:602px;width:66px;height:25px;line-height:25px;">1.96</div>
<div class="t" style="left:757px;top:602px;width:66px;height:25px;line-height:25px;">3.94</div>
<div class="t" style="left:824px;top:602px;width:68px;height:25px;line-height:25px;">3.25</div>
<div class="t c" style="left:893px;top:602px;width:38px;height:25px;line-height:25px;color:#1a1aa0;">负</div>
<div class="t c" style="left:932px;top:602px;width:38px;height:25px;line-height:25px;color:#1a1aa0;">输</div>
<div class="t c" style="left:971px;top:602px;width:57px;height:25px;line-height:25px;color:#1a1aa0;">小</div>
<div class="t c" style="left:2px;top:628px;width:80px;height:25px;line-height:25px;color:#fff;">德乙</div>
<div class="t" style="left:83px;top:628px;width:77px;height:25px;line-height:25px;">25-05-03</div>
<div class="t c" style="left:161px;top:628px;width:113px;height:25px;line-height:25px;color:#1f7f1f;">达姆施塔特</div>
<div class="t" style="left:275px;top:628px;width:91px;height:25px;line-height:25px;"><span style="color:#d41e26">0-4</span>(0-1)</div>
<div class="t" style="left:367px;top:628px;width:39px;height:25px;line-height:25px;">4-5</div>
<div class="t c" style="left:407px;top:628px;width:94px;height:25px;line-height:25px;">汉堡</div>
<div class="t" style="left:502px;top:628px;width:48px;height:25px;line-height:25px;">1.01</div>
<div class="t c" style="left:551px;top:628px;width:85px;height:25px;line-height:25px;">受平/半</div>
<div class="t" style="left:637px;top:628px;width:52px;height:25px;line-height:25px;">0.88</div>
<div class="t" style="left:690px;top:628px;width:66px;height:25px;line-height:25px;">2.95</div>
<div class="t" style="left:757px;top:628px;width:66px;height:25px;line-height:25px;">3.81</div>
<div class="t" style="left:824px;top:628px;width:68px;height:25px;line-height:25px;">2.13</div>
<div class="t c" style="left:893px;top:628px;width:38px;height:25px;line-height:25px;color:#1a1aa0;">负</div>
<div class="t c" style="left:932px;top:628px;width:38px;height:25px;line-height:25px;color:#1a1aa0;">输</div>
<div class="t c" style="left:971px;top:628px;width:57px;height:25px;line-height:25px;color:#d41e26;">大</div>
<div class="t c" style="left:2px;top:654px;width:80px;height:25px;line-height:25px;color:#fff;">德乙</div>
<div class="t" style="left:83px;top:654px;width:77px;height:25px;line-height:25px;">25-04-26</div>
<div class="t c" style="left:161px;top:654px;width:113px;height:25px;line-height:25px;">普鲁士明斯特</div>
<div class="t" style="left:275px;top:654px;width:91px;height:25px;line-height:25px;"><span style="color:#d41e26">1-1</span>(0-1)</div>
<div class="t" style="left:367px;top:654px;width:39px;height:25px;line-height:25px;">2-5</div>
<div class="t c" style="left:407px;top:654px;width:94px;height:25px;line-height:25px;color:#1f7f1f;">达姆施塔特</div>
<div class="t" style="left:502px;top:654px;width:48px;height:25px;line-height:25px;">0.87</div>
<div class="t c" style="left:551px;top:654px;width:85px;height:25px;line-height:25px;">受平/半</div>
<div class="t" style="left:637px;top:654px;width:52px;height:25px;line-height:25px;">1.02</div>
<div class="t" style="left:690px;top:654px;width:66px;height:25px;line-height:25px;">2.83</div>
<div class="t" style="left:757px;top:654px;width:66px;height:25px;line-height:25px;">3.55</div>
<div class="t" style="left:824px;top:654px;width:68px;height:25px;line-height:25px;">2.29</div>
<div class="t c" style="left:893px;top:654px;width:38px;height:25px;line-height:25px;color:#1f7f1f;">平</div>
<div class="t c" style="left:932px;top:654px;width:38px;height:25px;line-height:25px;color:#1a1aa0;">输</div>
<div class="t c" style="left:971px;top:654px;width:57px;height:25px;line-height:25px;color:#1a1aa0;">小</div>
<div class="t c" style="left:2px;top:680px;width:80px;height:25px;line-height:25px;color:#fff;">德乙</div>
<div class="t" style="left:83px;top:680px;width:77px;height:25px;line-height:25px;">25-04-20</div>
<div class="t c" style="left:161px;top:680px;width:113px;height:25px;line-height:25px;color:#1f7f1f;">达姆施塔特</div>
<div class="t" style="left:275px;top:680px;width:91px;height:25px;line-height:25px;"><span style="color:#d41e26">3-1</span>(1-0)</div>
<div class="t" style="left:367px;top:680px;width:39px;height:25px;line-height:25px;">4-8</div>
<div class="t c" style="left:407px;top:680px;width:94px;height:25px;line-height:25px;">汉诺威96</div>
<div class="t" style="left:502px;top:680px;width:48px;height:25px;line-height:25px;">0.91</div>
<div class="t c" style="left:551px;top:680px;width:85px;height:25px;line-height:25px;">平/半</div>
<div class="t" style="left:637px;top:680px;width:52px;height:25px;line-height:25px;">0.98</div>
<div class="t" style="left:690px;top:680px;width:66px;height:25px;line-height:25px;">2.09</div>
<div class="t" style="left:757px;top:680px;width:66px;height:25px;line-height:25px;">3.52</div>
<div class="t" style="left:824px;top:680px;width:68px;height:25px;line-height:25px;">3.24</div>
<div class="t c" style="left:893px;top:680px;width:38px;height:25px;line-height:25px;color:#d41e26;">胜</div>
<div class="t c" style="left:932px;top:680px;width:38px;height:25px;line-height:25px;color:#d41e26;">赢</div>
<div class="t c" style="left:971px;top:680px;width:57px;height:25px;line-height:25px;color:#d41e26;">大</div>
<div class="t c" style="left:1px;top:706px;width:1028px;height:25px;line-height:25px;letter-spacing:0.16px;">近<span style="color:#d41e26">10</span>场,胜6平1负3, 胜率:<span style="color:#d41e26">60%</span> 让胜率:<span style="color:#d41e26">50%</span> 大率:<span style="color:#d41e26">75%</span> 单率:<span style="color:#d41e26">40%</span></div>
<div class="t" style="left:21px;top:387px;line-height:16px;color:#333;-webkit-text-stroke:0.5px #333">达姆施塔特</div>
<div class="t c" style="left:422px;top:387px;line-height:16px;">近</div>
<div class="sel" style="left:438px;top:386px;width:38px;height:17px;"><span style="left:5px;font-family:'Liberation Serif',serif;font-size:13.5px;letter-spacing:0.5px;line-height:15px">10</span><svg style="right:4px;top:4px" width="11" height="7" viewBox="0 0 11 7"><path d="M1.2 1.2 L5.5 5.3 L9.8 1.2" fill="none" stroke="#000" stroke-width="2.1"/></svg></div>
<div class="t c" style="left:480px;top:387px;line-height:16px;">场</div>
<div class="cb" style="left:496px;top:386px"></div>
<div class="t c" style="left:512px;top:387px;line-height:16px;">同客</div>
<div class="cb on" style="left:540px;top:386px"><svg width="13" height="13" viewBox="0 0 13 13"><path d="M2.6 6.7 L5.2 9.4 L10.4 3.4" fill="none" stroke="#fff" stroke-width="2.2"/></svg></div>
<div class="t c" style="left:552px;top:387px;line-height:16px;">德乙</div>
<div class="cb on" style="left:577px;top:386px"><svg width="13" height="13" viewBox="0 0 13 13"><path d="M2.6 6.7 L5.2 9.4 L10.4 3.4" fill="none" stroke="#fff" stroke-width="2.2"/></svg></div>
<div class="t c" style="left:590px;top:387px;line-height:16px;">球会友谊</div>
<div class="cb on" style="left:638px;top:386px"><svg width="13" height="13" viewBox="0 0 13 13"><path d="M2.6 6.7 L5.2 9.4 L10.4 3.4" fill="none" stroke="#fff" stroke-width="2.2"/></svg></div>
<div class="t c" style="left:652px;top:387px;line-height:16px;">德国杯</div>
<div class="sel" style="left:535px;top:406px;width:61px;height:19px;"><span style="left:4px;">Crow*</span><svg style="right:4px;top:5px" width="11" height="7" viewBox="0 0 11 7"><path d="M1.2 1.2 L5.5 5.3 L9.8 1.2" fill="none" stroke="#000" stroke-width="2.1"/></svg></div>
<div class="sel" style="left:604px;top:406px;width:51px;height:19px;"><span style="left:4px;">终指</span><svg style="right:4px;top:5px" width="11" height="7" viewBox="0 0 11 7"><path d="M1.2 1.2 L5.5 5.3 L9.8 1.2" fill="none" stroke="#000" stroke-width="2.1"/></svg></div>
<div class="sel" style="left:726px;top:406px;width:70px;height:19px;"><span style="left:4px;">平均值</span><svg style="right:4px;top:5px" width="11" height="7" viewBox="0 0 11 7"><path d="M1.2 1.2 L5.5 5.3 L9.8 1.2" fill="none" stroke="#000" stroke-width="2.1"/></svg></div>
<div class="sel" style="left:804px;top:406px;width:51px;height:19px;"><span style="left:4px;">终指</span><svg style="right:4px;top:5px" width="11" height="7" viewBox="0 0 11 7"><path d="M1.2 1.2 L5.5 5.3 L9.8 1.2" fill="none" stroke="#000" stroke-width="2.1"/></svg></div>
<div class="sel" style="left:935px;top:406px;width:51px;height:19px;"><span style="left:4px;">全场</span><svg style="right:4px;top:5px" width="11" height="7" viewBox="0 0 11 7"><path d="M1.2 1.2 L5.5 5.3 L9.8 1.2" fill="none" stroke="#000" stroke-width="2.1"/></svg></div>
</body></html>
